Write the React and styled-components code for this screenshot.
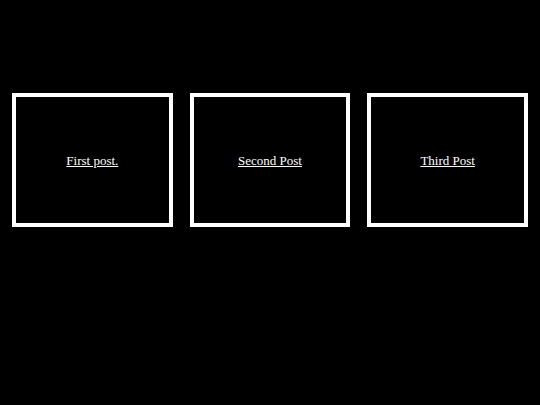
import React from 'react';
import styled, { createGlobalStyle } from 'styled-components';

const GlobalStyle = createGlobalStyle`
  html, body {
    margin: 0;
    background: #000;
    font-family: "Liberation Serif", "Times New Roman", serif;
  }
`;

const posts = [
  { id: 1, title: 'First post.' },
  { id: 2, title: 'Second Post' },
  { id: 3, title: 'Third Post' },
];

const App = () => {
  return (
    <>
      <GlobalStyle />
      <Page>
        <PostGrid>
          {posts.map((post) => (
            <PostCard key={post.id}>
              <PostLink href={`#post-${post.id}`}>{post.title}</PostLink>
            </PostCard>
          ))}
        </PostGrid>
      </Page>
    </>
  );
};

export default App;

const Page = styled.div`
  width: 540px;
  height: 405px;
  background: #000;
  padding: 93px 12px 0 12px;
  box-sizing: border-box;
`;

const PostGrid = styled.div`
  display: flex;
  gap: 17px;
`;

const PostCard = styled.div`
  flex: 1;
  height: 134px;
  box-sizing: border-box;
  border: 4px solid #fff;
  display: flex;
  align-items: center;
  justify-content: center;
`;

const PostLink = styled.a`
  color: #fff;
  font-size: 13px;
  line-height: 1;
  text-decoration: underline;
`;
